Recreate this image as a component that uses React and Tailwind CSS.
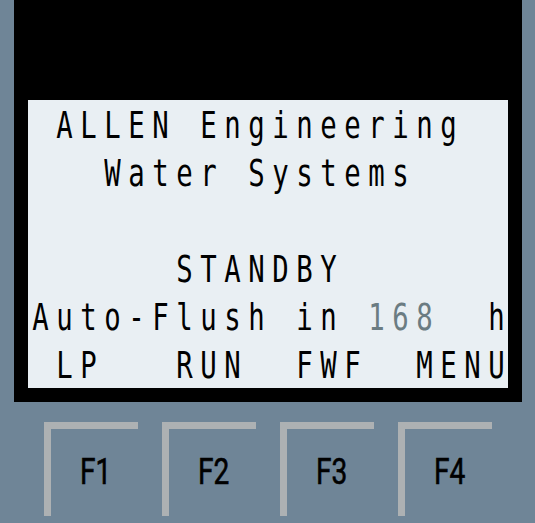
// Operator panel: character LCD with four soft keys below it.

const rows = [
  ' ALLEN Engineering  ',
  '   Water Systems    ',
  '                    ',
  '      STANDBY       ',
  'Auto-Flush in 168  h',
  ' LP   RUN  FWF  MENU',
]

// columns 14-16 on the flush row hold the live counter, drawn dimmer
const isCounter = (r, c) => r === 4 && c >= 14 && c <= 16

function LcdRow({ text, r }) {
  return (
    <div className="grid grid-cols-[repeat(20,24px)] h-[48px] leading-[50px]">
      {text.split('').map((ch, c) => (
        <div key={c} className="flex justify-center">
          <span
            className={`inline-block scale-x-[0.72] ${isCounter(r, c) ? 'text-[#6b7c82]' : 'text-black'}`}
          >
            {ch === ' ' ? '\u00a0' : ch}
          </span>
        </div>
      ))}
    </div>
  )
}

function SoftKey({ label }) {
  return (
    <div className="w-[94px] h-[94px] border-t-[7px] border-l-[7px] border-[#adb1b3] flex items-center justify-center">
      <span className="text-[37px] font-normal text-black scale-x-[0.76] inline-block font-['Roboto',sans-serif] mt-[-2px] ml-[2px] [-webkit-text-stroke:0.6px_black]">
        {label}
      </span>
    </div>
  )
}

export default function App() {
  return (
    <div className="w-[535px] h-[523px] bg-[#6f8597] overflow-hidden">
      <div className="ml-[14px] w-[508px] h-[402px] bg-black pt-[100px] px-[14px]">
        <div className="w-[480px] h-[288px] bg-[#e9eff3] font-['DejaVu_Sans_Mono',monospace] text-[38px]">
          {rows.map((t, r) => (
            <LcdRow key={r} text={t} r={r} />
          ))}
        </div>
      </div>
      <div className="flex gap-[24px] ml-[44px] mt-[20px]">
        {['F1', 'F2', 'F3', 'F4'].map((k) => (
          <SoftKey key={k} label={k} />
        ))}
      </div>
    </div>
  )
}
